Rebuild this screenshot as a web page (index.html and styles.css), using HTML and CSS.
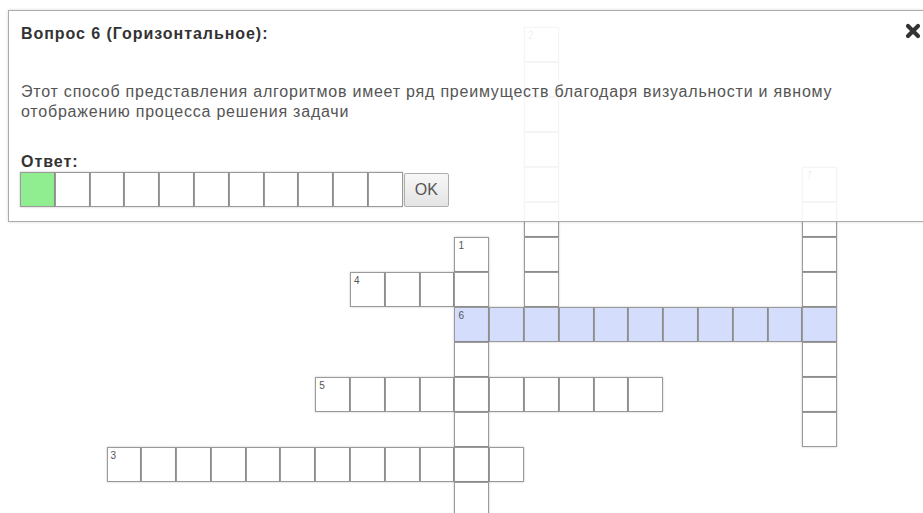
FILE: index.html
```html
<!DOCTYPE html>
<html lang="ru">
<head>
<meta charset="utf-8">
<title>Кроссворд</title>
<link rel="stylesheet" href="styles.css">
</head>
<body>
<div class="page">
  <div class="board">
    <!-- rows 1-4: word 2 (down) -->
    <div class="cell" style="grid-area:1/13"><span class="num">2</span></div>
    <div class="cell" style="grid-area:2/13"></div>
    <div class="cell" style="grid-area:3/13"></div>
    <div class="cell" style="grid-area:4/13"></div>
    <!-- rows 5-6: word 7 (down) starts -->
    <div class="cell" style="grid-area:5/13"></div>
    <div class="cell" style="grid-area:5/21"><span class="num">7</span></div>
    <div class="cell" style="grid-area:6/13"></div>
    <div class="cell" style="grid-area:6/21"></div>
    <!-- row 7: word 1 (down) starts -->
    <div class="cell" style="grid-area:7/11"><span class="num">1</span></div>
    <div class="cell" style="grid-area:7/13"></div>
    <div class="cell" style="grid-area:7/21"></div>
    <!-- row 8: word 4 (across) -->
    <div class="cell" style="grid-area:8/8"><span class="num">4</span></div>
    <div class="cell" style="grid-area:8/9"></div>
    <div class="cell" style="grid-area:8/10"></div>
    <div class="cell" style="grid-area:8/11"></div>
    <div class="cell" style="grid-area:8/13"></div>
    <div class="cell" style="grid-area:8/21"></div>
    <!-- row 9: word 6 (across), selected -->
    <div class="cell active" style="grid-area:9/11"><span class="num">6</span></div>
    <div class="cell active" style="grid-area:9/12"></div>
    <div class="cell active" style="grid-area:9/13"></div>
    <div class="cell active" style="grid-area:9/14"></div>
    <div class="cell active" style="grid-area:9/15"></div>
    <div class="cell active" style="grid-area:9/16"></div>
    <div class="cell active" style="grid-area:9/17"></div>
    <div class="cell active" style="grid-area:9/18"></div>
    <div class="cell active" style="grid-area:9/19"></div>
    <div class="cell active" style="grid-area:9/20"></div>
    <div class="cell active" style="grid-area:9/21"></div>
    <!-- row 10 -->
    <div class="cell" style="grid-area:10/11"></div>
    <div class="cell" style="grid-area:10/21"></div>
    <!-- row 11: word 5 (across) -->
    <div class="cell" style="grid-area:11/7"><span class="num">5</span></div>
    <div class="cell" style="grid-area:11/8"></div>
    <div class="cell" style="grid-area:11/9"></div>
    <div class="cell" style="grid-area:11/10"></div>
    <div class="cell" style="grid-area:11/11"></div>
    <div class="cell" style="grid-area:11/12"></div>
    <div class="cell" style="grid-area:11/13"></div>
    <div class="cell" style="grid-area:11/14"></div>
    <div class="cell" style="grid-area:11/15"></div>
    <div class="cell" style="grid-area:11/16"></div>
    <div class="cell" style="grid-area:11/21"></div>
    <!-- row 12 -->
    <div class="cell" style="grid-area:12/11"></div>
    <div class="cell" style="grid-area:12/21"></div>
    <!-- row 13: word 3 (across) -->
    <div class="cell" style="grid-area:13/1"><span class="num">3</span></div>
    <div class="cell" style="grid-area:13/2"></div>
    <div class="cell" style="grid-area:13/3"></div>
    <div class="cell" style="grid-area:13/4"></div>
    <div class="cell" style="grid-area:13/5"></div>
    <div class="cell" style="grid-area:13/6"></div>
    <div class="cell" style="grid-area:13/7"></div>
    <div class="cell" style="grid-area:13/8"></div>
    <div class="cell" style="grid-area:13/9"></div>
    <div class="cell" style="grid-area:13/10"></div>
    <div class="cell" style="grid-area:13/11"></div>
    <div class="cell" style="grid-area:13/12"></div>
    <!-- rows 14-15: end of word 1 -->
    <div class="cell" style="grid-area:14/11"></div>
    <div class="cell" style="grid-area:15/11"></div>
  </div>

  <div class="question">
    <button class="close" type="button" aria-label="Закрыть">
      <svg viewBox="0 0 16 16" width="16" height="16"><path d="M3 3L13 13M13 3L3 13" /></svg>
    </button>
    <h4 class="question-title">Вопрос 6 (Горизонтальное):</h4>
    <p class="question-text">Этот способ представления алгоритмов имеет ряд преимуществ благодаря визуальности и явному отображению процесса решения задачи</p>
    <div class="answer-label">Ответ:</div>
    <div class="answer">
      <div class="answer-cell current"></div>
      <div class="answer-cell"></div>
      <div class="answer-cell"></div>
      <div class="answer-cell"></div>
      <div class="answer-cell"></div>
      <div class="answer-cell"></div>
      <div class="answer-cell"></div>
      <div class="answer-cell"></div>
      <div class="answer-cell"></div>
      <div class="answer-cell"></div>
      <div class="answer-cell"></div>
      <button class="ok" type="button">OK</button>
    </div>
  </div>
</div>
</body>
</html>
```

FILE: styles.css
```css
html, body {
  margin: 0;
  padding: 0;
  overflow: hidden;
  background: #fff;
}

body {
  font-family: "Liberation Sans", Arial, Helvetica, sans-serif;
  font-size: 16px;
  line-height: 20px;
  letter-spacing: 0.78px;
  color: #333;
}

.page {
  position: relative;
  height: 513px;
  overflow: hidden;
}

/* crossword board */
.board {
  display: grid;
  grid-template-columns: repeat(21, 34.8px);
  grid-template-rows: repeat(15, 35px);
  padding: 27px 0 0 106.5px;
  letter-spacing: 0;
}

.cell {
  position: relative;
  box-sizing: border-box;
  border: 1px solid #9a9a9a;
  background: #fff;
  box-shadow: 0 0 2px rgba(0, 0, 0, 0.25);
}

.cell.active {
  background: #d4ddfc;
}

.num {
  position: absolute;
  top: 2px;
  left: 3px;
  font-size: 10px;
  line-height: 11px;
  color: #555;
}

/* question popup */
.question {
  position: absolute;
  top: 10px;
  left: 8px;
  width: 920px;
  box-sizing: border-box;
  padding: 13px 40px 14px 12px;
  background: rgba(255, 255, 255, 0.9);
  border: 1px solid #acacac;
  box-shadow: 0 0 3px rgba(0, 0, 0, 0.15);
  z-index: 2;
}

.close {
  position: absolute;
  top: 12px;
  right: 6px;
  width: 16px;
  height: 16px;
  padding: 0;
  border: 0;
  background: none;
  cursor: pointer;
}

.close svg {
  display: block;
}

.close path {
  stroke: #333;
  stroke-width: 4.2;
  stroke-linecap: round;
  fill: none;
}

.question-title {
  margin: 0;
  font-size: 16px;
  font-weight: bold;
  line-height: 20px;
  letter-spacing: 0.95px;
  color: #333;
}

.question-text {
  margin: 38px 0 0;
  color: #555;
}

.answer-label {
  margin-top: 30px;
  font-weight: bold;
  letter-spacing: 0.95px;
  color: #333;
}

.answer {
  display: flex;
  align-items: center;
  margin-top: 0;
  margin-left: -1px;
  letter-spacing: 0;
}

.answer-cell {
  box-sizing: border-box;
  width: 34.8px;
  height: 35px;
  border: 1px solid #9a9a9a;
  background: #fff;
  box-shadow: 0 0 2px rgba(0, 0, 0, 0.25);
}

.answer-cell.current {
  background: #90ee90;
}

.ok {
  box-sizing: border-box;
  width: 45px;
  height: 34px;
  margin: 0 0 0 1px;
  padding: 0;
  font-family: "Liberation Sans", Arial, sans-serif;
  font-size: 16px;
  color: #555;
  background: linear-gradient(#f7f7f7, #e4e4e4);
  border: 1px solid #adadad;
  border-radius: 2px;
}
```
